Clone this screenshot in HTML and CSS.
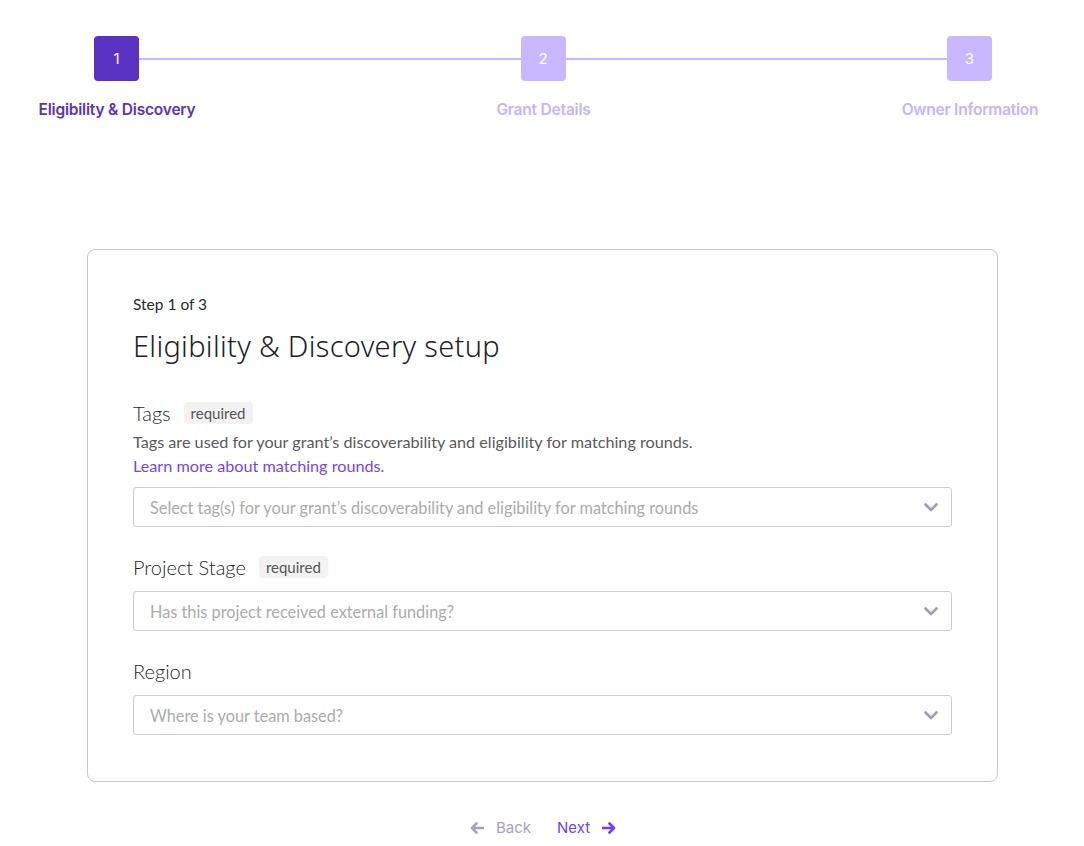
FILE: index.html
```html
<!DOCTYPE html>
<html>
<head>
<meta charset="utf-8">
<link rel="stylesheet" href="styles.css">
</head>
<body>
<div class="stepper">
  <div class="squares">
    <div class="sq active">1</div>
    <div class="line"></div>
    <div class="sq">2</div>
    <div class="line"></div>
    <div class="sq">3</div>
  </div>
  <div class="labels">
    <div class="lbl active">Eligibility &amp; Discovery</div>
    <div class="lbl">Grant Details</div>
    <div class="lbl">Owner Information</div>
  </div>
</div>

<div class="card">
  <div class="step">Step 1 of 3</div>
  <h1 class="title">Eligibility &amp; Discovery setup</h1>

  <div class="field">
    <div class="label-row"><span class="label">Tags</span><span class="badge">required</span></div>
    <div class="desc">Tags are used for your grant’s discoverability and eligibility for matching rounds.</div>
    <a class="link" href="#">Learn more about matching rounds.</a>
    <div class="select tags-select"><span class="ph">Select tag(s) for your grant’s discoverability and eligibility for matching rounds</span>
      <svg class="chev" width="14" height="9" viewBox="0 0 14 9"><path d="M1.5 1.5 L7 7 L12.5 1.5" fill="none" stroke="#a29cb8" stroke-width="2.6" stroke-linecap="round" stroke-linejoin="round"/></svg>
    </div>
  </div>

  <div class="field">
    <div class="label-row"><span class="label">Project Stage</span><span class="badge">required</span></div>
    <div class="select"><span class="ph">Has this project received external funding?</span>
      <svg class="chev" width="14" height="9" viewBox="0 0 14 9"><path d="M1.5 1.5 L7 7 L12.5 1.5" fill="none" stroke="#a29cb8" stroke-width="2.6" stroke-linecap="round" stroke-linejoin="round"/></svg>
    </div>
  </div>

  <div class="field">
    <div class="label-row"><span class="label">Region</span></div>
    <div class="select"><span class="ph">Where is your team based?</span>
      <svg class="chev" width="14" height="9" viewBox="0 0 14 9"><path d="M1.5 1.5 L7 7 L12.5 1.5" fill="none" stroke="#a29cb8" stroke-width="2.6" stroke-linecap="round" stroke-linejoin="round"/></svg>
    </div>
  </div>
</div>

<div class="nav">
  <a class="back" href="#">
    <svg width="14" height="12" viewBox="0 0 14 12"><path d="M13 6 H2 M6.5 1.5 L2 6 L6.5 10.5" fill="none" stroke="#a8a2bf" stroke-width="2.6" stroke-linecap="round" stroke-linejoin="round"/></svg>
    <span>Back</span>
  </a>
  <a class="next" href="#">
    <span>Next</span>
    <svg width="14" height="12" viewBox="0 0 14 12"><path d="M1 6 H12 M7.5 1.5 L12 6 L7.5 10.5" fill="none" stroke="#6e3ff3" stroke-width="2.6" stroke-linecap="round" stroke-linejoin="round"/></svg>
  </a>
</div>
</body>
</html>
```

FILE: styles.css
```css
* { box-sizing: border-box; }
body {
  margin: 0;
  background: #fff;
  font-family: Lato, "Liberation Sans", sans-serif;
  color: #222;
}
.stepper {
  padding-top: 36px;
}
.squares {
  display: flex;
  align-items: center;
  margin: 0 92px 0 94px;
}
.sq {
  width: 45px;
  height: 45px;
  border-radius: 4px;
  background: #c9b8ff;
  color: #fff;
  display: flex;
  align-items: center;
  justify-content: center;
  font-family: Inter, sans-serif;
  font-size: 15px;
  flex: none;
}
.sq.active { background: #5932c4; }
.line {
  flex: 1;
  height: 2px;
  background: #c9b8ff;
}
.labels {
  display: grid;
  grid-template-columns: 180px 180px 180px;
  justify-content: space-between;
  margin: 20px 24px 0 27px;
}
.lbl {
  text-align: center;
  font-family: Inter, sans-serif;
  font-weight: 600;
  font-size: 15.5px;
  line-height: 18px;
  color: #c5b4ff;
  letter-spacing: -0.2px;
}
.lbl.active { color: #5932c4; }

.card {
  margin: 130px 86px 0 87px;
  border: 1px solid #c9c4d8;
  border-radius: 8px;
  padding: 45px 45px 46px 45px;
}
.step {
  font-size: 15.5px;
  line-height: 18px;
  color: #2a2a2a;
}
.title {
  margin: 15px 0 0;
  font-family: "Noto Sans", sans-serif;
  font-weight: 300;
  font-size: 29px;
  line-height: 35px;
  color: #1e1e28;
  letter-spacing: 0.3px;
}
.field { margin-top: 39px; }
.field + .field { margin-top: 29px; }
.label-row {
  display: flex;
  align-items: center;
  height: 22px;
}
.label {
  font-size: 20px;
  font-weight: 300;
  color: #1f1f1f;
}
.badge {
  margin-left: 13px;
  background: #f2f2f2;
  border-radius: 4px;
  font-size: 15px;
  color: #555;
  padding: 0 7px;
  height: 22px;
  line-height: 22px;
}
.desc {
  margin-top: 6px;
  font-size: 16.2px;
  line-height: 24px;
  color: #5a5a5a;
}
.link {
  display: block;
  font-size: 16.2px;
  line-height: 24px;
  color: #7445f5;
  text-decoration: none;
}
.select {
  margin-top: 13px;
  height: 40px;
  border: 1px solid #cccccc;
  border-radius: 3px;
  display: flex;
  align-items: center;
  justify-content: space-between;
  padding: 0 13px 0 16px;
}
.tags-select { margin-top: 9px; }
.ph {
  font-size: 16.3px;
  font-weight: 400;
  color: #ababab;
}
.chev { flex: none; }
.nav {
  display: flex;
  justify-content: center;
  gap: 26px;
  margin-top: 36px;
  padding-left: 2px;
}
.nav a {
  display: flex;
  align-items: center;
  gap: 12px;
  text-decoration: none;
  font-family: Inter, sans-serif;
  font-size: 15px;
}
.back { color: #a8a2bf; }
.next { color: #6e3ff3; }
```
